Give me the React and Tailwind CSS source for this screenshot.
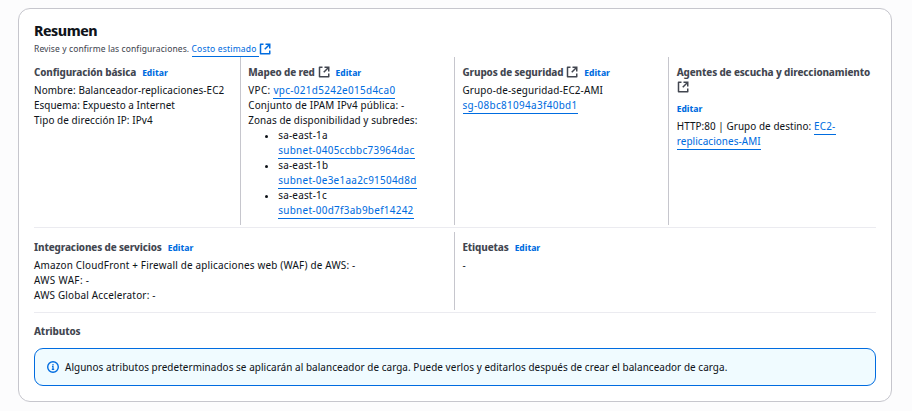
function External({ className = '' }) {
  return (
    <svg viewBox="0 0 12 12" fill="none" stroke="currentColor" strokeWidth="1.5" className={'inline-block h-3 w-3 align-[-2px] ' + className}>
      <path d="M4.5 1.25H1.5v9.5h9.25V7.5" strokeLinejoin="round" />
      <path d="M6.5 1.25h4.25V5.5M10.5 1.5 5.75 6.25" />
    </svg>
  );
}

function Link({ children, className = '' }) {
  return (
    <a className={'border-b border-[#006ce0] pb-px text-[#006ce0] ' + className}>{children}</a>
  );
}

function Label({ children, icon, edit = true }) {
  return (
    <div className="flex flex-wrap items-baseline gap-x-1.5 gap-y-[6px] leading-[15px]">
      <h3 className="font-bold tracking-[-0.13px] text-[#424650]">
        {children}
        {icon && <> <External className="ml-[0.5px]" /></>}
      </h3>
      {edit && <a className="text-[9px] font-bold text-[#006ce0]">Editar</a>}
    </div>
  );
}

function Column({ children, divided }) {
  return (
    <section className={'pt-[7.5px] ' + (divided ? '-ml-[8.5px] border-l border-[#c6c6cd] pl-[7.5px]' : '')}>
      {children}
    </section>
  );
}

const subnets = [
  ['sa-east-1a', 'subnet-0405ccbbc73964dac'],
  ['sa-east-1b', 'subnet-0e3e1aa2c91504d8d'],
  ['sa-east-1c', 'subnet-00d7f3ab9bef14242'],
];

export default function App() {
  return (
    <main className="h-[411px] bg-[#fcfcfd] pt-2 pl-[18px] font-['Noto_Sans_Display','Noto_Sans',sans-serif] text-[10.5px] leading-[15px] text-[#0f141a]">
      <div className="h-[394px] w-[874px] rounded-xl border border-[#c6c6cd] bg-white px-[15px] pt-[12px]">
        <h2 className="text-[15px] leading-[18px] font-bold tracking-[-0.45px]">Resumen</h2>
        <p className="mt-[2px] text-[9px] leading-[15px] tracking-[0.1px] text-[#424650]">
          Revise y confirme las configuraciones.{' '}
          <Link className="pr-[2px] tracking-[0.2px]">Costo estimado</Link>
          <External className="align-[-3px] text-[#006ce0]" />
        </p>

        <div className="mt-[1px] grid h-[168px] grid-cols-4 gap-x-[15px]">
          <Column>
            <Label>Configuración básica</Label>
            <div className="mt-[3px]">
              <p className="tracking-[0.1px]">Nombre: Balanceador-replicaciones-EC2</p>
              <p className="tracking-[0.04px]">Esquema: Expuesto a Internet</p>
              <p className="tracking-[0.08px]">Tipo de dirección IP: IPv4</p>
            </div>
          </Column>
          <Column divided>
            <Label icon>Mapeo de red</Label>
            <div className="mt-[3px]">
              <p className="tracking-[0.34px]">VPC: <Link>vpc-021d5242e015d4ca0</Link></p>
              <p className="tracking-[0.15px]">Conjunto de IPAM IPv4 pública: -</p>
              <p className="tracking-[0.08px]">Zonas de disponibilidad y subredes:</p>
              <ul>
                {subnets.map(([zone, id]) => (
                  <li key={zone} className="flex items-start pl-[17px]">
                    <span className="mt-[7px] mr-[10px] h-[3px] w-[3px] rounded-full bg-[#0f141a]" />
                    <div>
                      <p className="tracking-[0.2px]">{zone}</p>
                      <p className="tracking-[0.3px]"><Link>{id}</Link></p>
                    </div>
                  </li>
                ))}
              </ul>
            </div>
          </Column>
          <Column divided>
            <Label icon>Grupos de seguridad</Label>
            <div className="mt-[3px]">
              <p className="tracking-[0.14px]">Grupo-de-seguridad-EC2-AMI</p>
              <p className="tracking-[0.35px]"><Link>sg-08bc81094a3f40bd1</Link></p>
            </div>
          </Column>
          <Column divided>
            <Label icon>Agentes de escucha y direccionamiento</Label>
            <div className="mt-[3px]">
              <p className="tracking-[0.07px]">HTTP:80 | Grupo de destino: <Link><span className="tracking-[0.25px]">EC2-</span><br />replicaciones-AMI</Link></p>
            </div>
          </Column>
        </div>

        <div className="mt-[2px] h-px bg-[#ebebf0]" />

        <div className="mt-1 grid h-[78px] grid-cols-2 gap-x-[15px]">
          <Column>
            <Label>Integraciones de servicios</Label>
            <div className="mt-[3px] tracking-[0.19px]">
              <p>Amazon CloudFront + Firewall de aplicaciones web (WAF) de AWS: -</p>
              <p className="tracking-[0.35px]">AWS WAF: -</p>
              <p>AWS Global Accelerator: -</p>
            </div>
          </Column>
          <Column divided>
            <Label>Etiquetas</Label>
            <p className="mt-[3px]">-</p>
          </Column>
        </div>

        <div className="mt-[2px] h-px bg-[#ebebf0]" />

        <div className="mt-[11px]"><Label edit={false}>Atributos</Label></div>
        <div className="mt-[9px] flex h-[38px] items-center gap-1.5 rounded-[9px] border border-[#006ce0] bg-[#f0fbff] pl-3">
          <svg viewBox="0 0 12 12" fill="none" stroke="#006ce0" strokeWidth="1.4" className="h-3 w-3">
            <circle cx="6" cy="6" r="5.3" />
            <path d="M6 8.8V5.4H5M4.8 8.4h2.4M6 3v1.3" strokeWidth="1.2" />
          </svg>
          <p className="tracking-[0.06px]">Algunos atributos predeterminados se aplicarán al balanceador de carga. Puede verlos y editarlos después de crear el balanceador de carga.</p>
        </div>
      </div>
    </main>
  );
}
